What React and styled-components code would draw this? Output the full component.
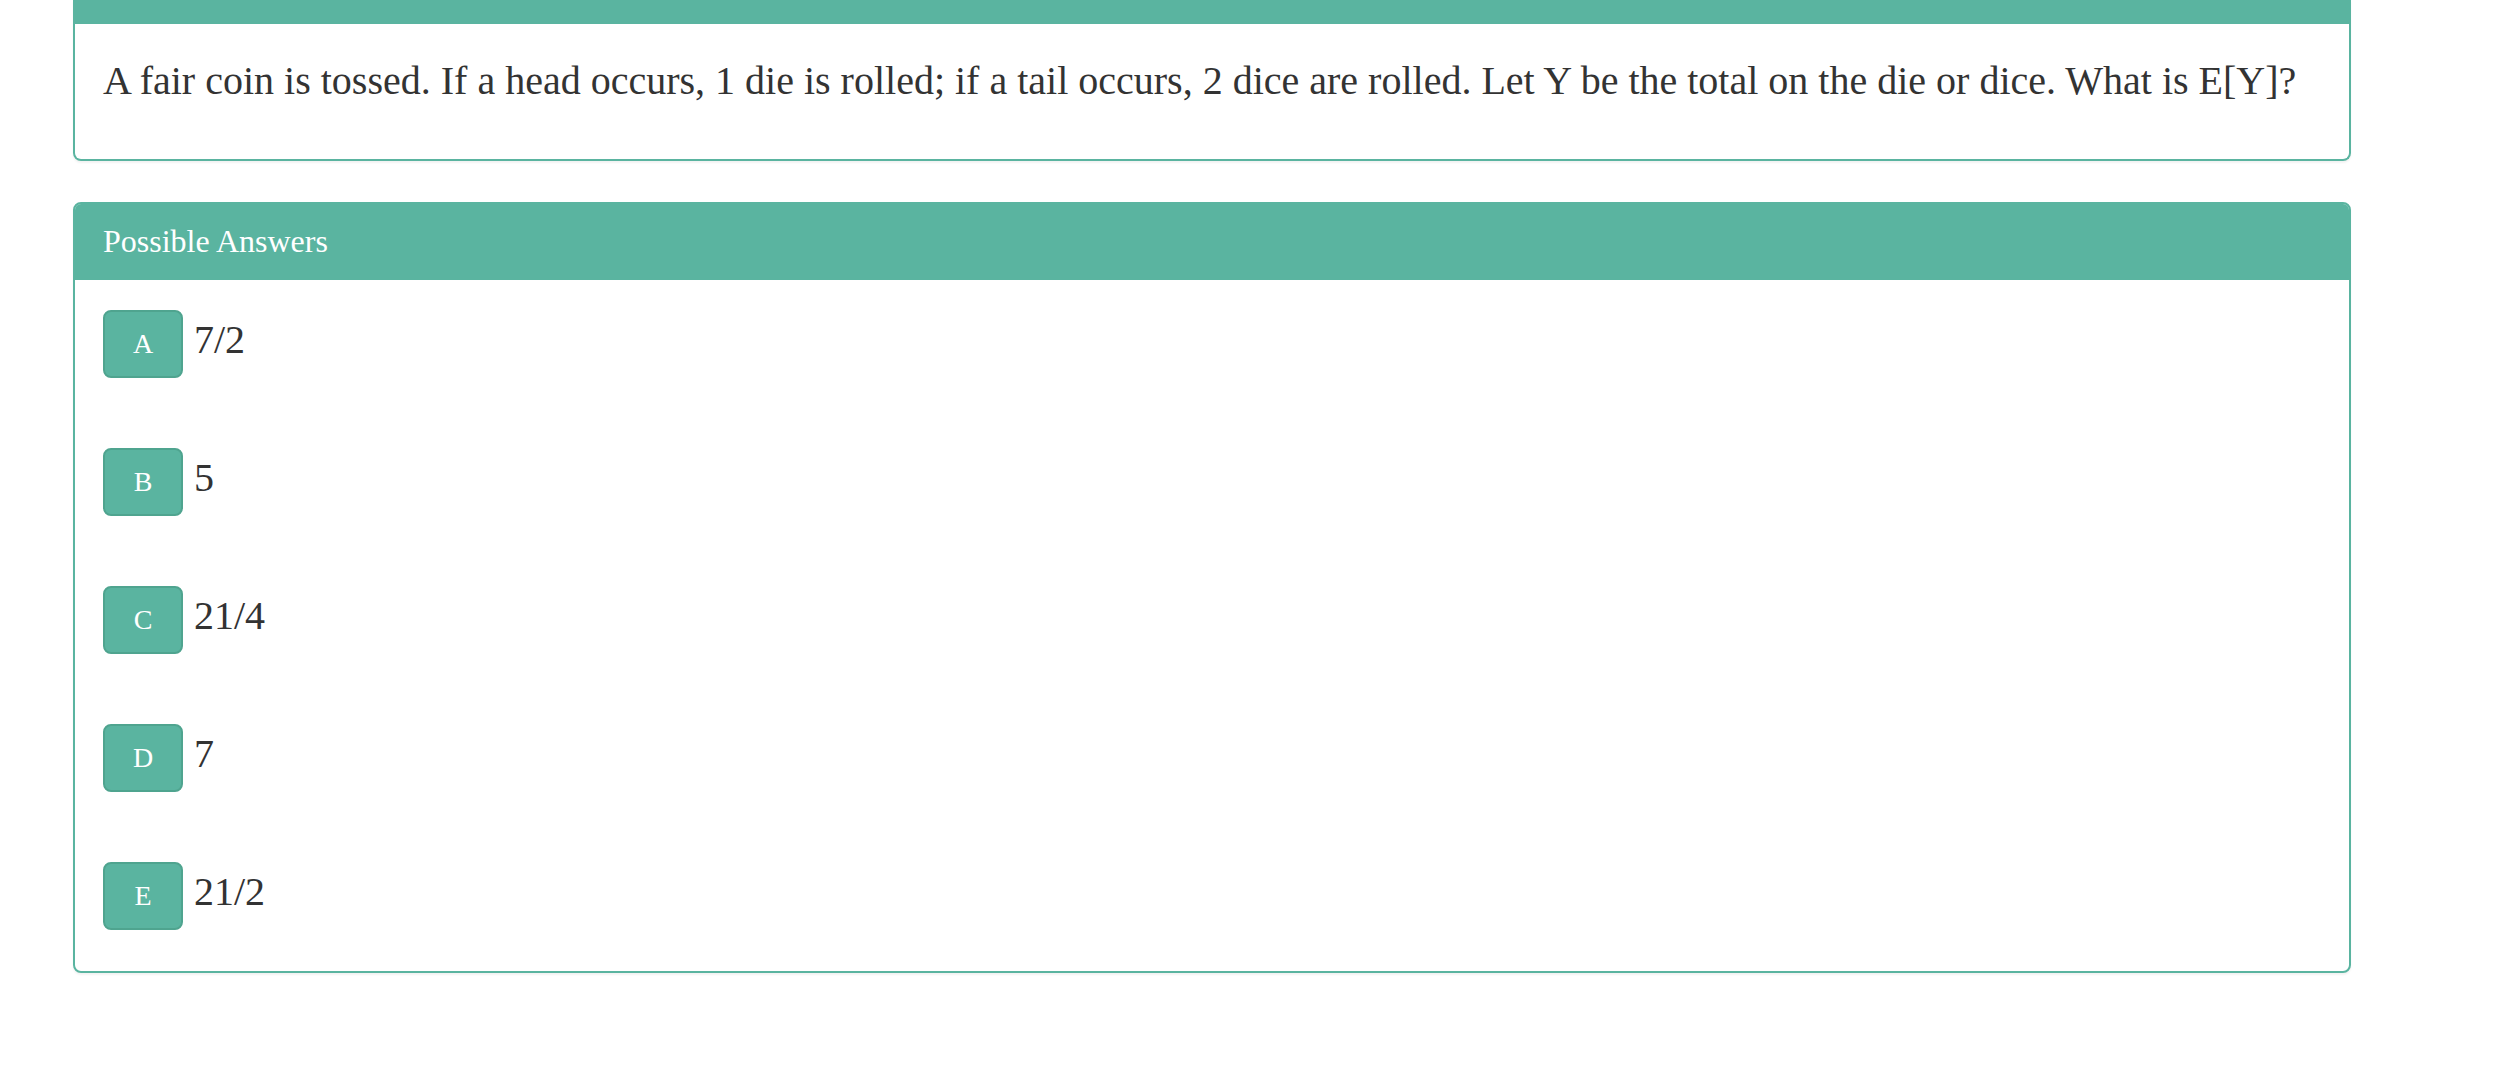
import React from 'react'
import styled, { createGlobalStyle } from 'styled-components'

const teal = '#5ab4a0'

const GlobalStyle = createGlobalStyle`
  html, body {
    margin: 0;
    padding: 0;
    background: #ffffff;
  }
  body {
    font-family: "Liberation Serif", "Times New Roman", serif;
    color: #333333;
  }
`

const Page = styled.div`
  padding: 0 163px 0 73px;
`

const Panel = styled.div`
  border: 2px solid ${teal};
  border-radius: 8px;
  background: #fff;
  box-shadow: 0 2px 2px rgba(0, 0, 0, 0.05);
  margin-bottom: 41px;
  overflow: hidden;
  ${({ $cut }) => $cut && `
    border-top: none;
    border-top-left-radius: 0;
    border-top-right-radius: 0;
  `}
`

const Heading = styled.div`
  background: ${teal};
  color: #fff;
  padding: 19px 28px 21px;
  font-size: 32px;
  line-height: 36px;
  margin: -2px -2px 0;
  border: 2px solid ${teal};
  border-bottom: none;
  border-radius: 8px 8px 0 0;
`

const Strip = styled.div`
  background: ${teal};
  height: 24px;
  margin: 0 -2px;
`

const Body = styled.div`
  padding: ${({ $top, $bottom }) => `${$top}px 28px ${$bottom}px`};
`

const Question = styled.p`
  margin: 0;
  font-size: 40px;
  line-height: 57px;
`

const Answers = styled.div`
  display: flex;
  flex-direction: column;
  gap: 70px;
`

const Answer = styled.div`
  display: flex;
  align-items: baseline;
  gap: 11px;
  font-size: 40px;
  line-height: 57px;
`

const Letter = styled.span`
  display: inline-block;
  box-sizing: border-box;
  width: 80px;
  padding: 12px 0;
  text-align: center;
  font-size: 28px;
  line-height: 40px;
  color: #fff;
  background: ${teal};
  border: 2px solid #4fa48f;
  border-radius: 8px;
`

const answers = [
  ['A', '7/2'],
  ['B', '5'],
  ['C', '21/4'],
  ['D', '7'],
  ['E', '21/2'],
]

const App = () => (
  <Page>
    <GlobalStyle />
    <Panel $cut>
      <Strip />
      <Body $top={28} $bottom={50}>
        <Question>
          A fair coin is tossed. If a head occurs, 1 die is rolled; if a tail occurs, 2 dice are rolled. Let Y be the total on the die or dice. What is E[Y]?
        </Question>
      </Body>
    </Panel>
    <Panel>
      <Heading>Possible Answers</Heading>
      <Body $top={30} $bottom={41}>
        <Answers>
          {answers.map(([letter, text]) => (
            <Answer key={letter}>
              <Letter>{letter}</Letter>
              <span>{text}</span>
            </Answer>
          ))}
        </Answers>
      </Body>
    </Panel>
  </Page>
)

export default App
